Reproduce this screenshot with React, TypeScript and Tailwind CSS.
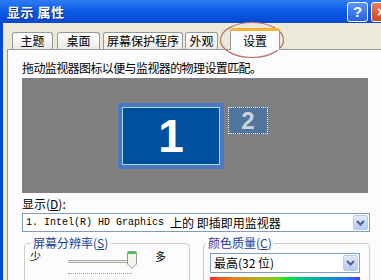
import React from 'react';

const cjk = { fontFamily: '"Noto Sans CJK SC", "Liberation Sans", sans-serif' };

const DropBtn = ({ className = '' }: { className?: string }) => (
  <div className={`flex items-center justify-center rounded-[2px] border border-[#b6c9f2] bg-gradient-to-b from-[#e2ebfd] to-[#b4c9f5] ${className}`}>
    <svg width="9" height="6" viewBox="0 0 9 6">
      <path d="M1 1 L4.5 4.5 L8 1" stroke="#4d6185" strokeWidth="2" fill="none" />
    </svg>
  </div>
);

const tabs = [
  { label: '主题', w: 'w-[41px]', ml: 'ml-[5px]' },
  { label: '桌面', w: 'w-[43px]', ml: 'ml-[4px]' },
  { label: '屏幕保护程序', w: 'w-[80px]', ml: 'ml-[3px]' },
  { label: '外观', w: 'w-[33px]', ml: 'ml-[2px]' },
];

export default function App() {
  return (
    <div className="relative w-[381px] h-[280px] overflow-hidden flex flex-col bg-[#0847d2] text-[12px] text-black" style={cjk}>
      {/* title bar */}
      <div className="h-[23px] shrink-0 flex items-center bg-gradient-to-b from-[#2f7cf6] via-[#0a5ae6] to-[#0848cf] pl-[7px]">
        <span className="text-white font-bold text-[13px] leading-none tracking-[0.5px] [text-shadow:1px_1px_0_#0a2a7a]">显示 属性</span>
        <div className="ml-auto flex gap-[3px] items-center">
          <div className="w-[21px] h-[20px] rounded-[3px] border border-white bg-gradient-to-b from-[#5b93f8] to-[#2660df] flex items-center justify-center text-white font-bold text-[15px] leading-none" style={{ fontFamily: '"Liberation Sans", sans-serif' }}>?</div>
          <div className="w-[21px] h-[20px] rounded-[3px] border border-white bg-gradient-to-b from-[#e9805c] to-[#cf4519] flex items-center justify-center text-white font-bold text-[15px] leading-none mr-[-11px]" style={{ fontFamily: '"Liberation Sans", sans-serif' }}>×</div>
        </div>
      </div>

      <div className="flex flex-1 min-h-0">
        <div className="w-[3px] shrink-0 bg-[#0847d2]" />
        <div className="flex-1 bg-[#ece9d8] pl-[4px] flex flex-col min-h-0">
          {/* tabs */}
          <div className="h-[26px] shrink-0 flex items-end">
            {tabs.map((t) => (
              <div
                key={t.label}
                className={`${t.w} ${t.ml} h-[17px] rounded-t-[3px] border border-b-0 border-[#919b9c] bg-gradient-to-b from-white to-[#ecebe6] flex items-center justify-center text-[12px] leading-none`}
              >
                {t.label}
              </div>
            ))}
            <div className="w-[50px] ml-[12px] h-[22px] mb-[-1px] relative z-10 rounded-t-[3px] border-x border-[#919b9c] border-t-[3px] border-t-[#f7b338] bg-[#fcfcfe] flex items-center justify-center text-[12px] leading-none">
              设置
            </div>
          </div>

          {/* panel */}
          <div className="flex-1 min-h-0 border-t border-l border-[#919b9c] bg-[#fcfcfe] pl-[14px] pt-[10px] flex flex-col">
            <div className="leading-[16px] tracking-[-0.6px]">拖动监视器图标以便与监视器的物理设置匹配。</div>

            <div className="mt-[2px] w-[346px] h-[115px] shrink-0 bg-[#808080] flex items-start pl-[96px] pt-[25px] gap-[4px]">
              <div className="w-[106px] h-[66px] bg-[#4a79c2] p-[4px]">
                <div className="w-full h-full border border-[#a8dcf8] bg-[#00509e] flex items-center justify-center text-white font-bold text-[46px] leading-none" style={{ fontFamily: '"Liberation Sans", sans-serif' }}>
                  1
                </div>
              </div>
              <div className="mt-[4px] w-[40px] h-[27px] border border-dotted border-white bg-[#52759d] flex items-center justify-center text-[#ccd4dc] font-bold text-[24px] leading-none" style={{ fontFamily: '"Liberation Sans", sans-serif' }}>
                2
              </div>
            </div>

            <div className="mt-[3px] leading-[16px]">显示(<span className="underline">D</span>):</div>
            <div className="mt-[1px] w-[348px] h-[19px] shrink-0 border border-[#7f9db9] bg-white flex items-center pl-[3px] pr-[1px]">
              <span className="text-[10px] whitespace-pre" style={{ fontFamily: '"Liberation Mono", monospace' }}>1. Intel(R) HD Graphics </span>
              <span className="text-[12px] leading-none">上的 即插即用监视器</span>
              <DropBtn className="ml-auto w-[15px] h-[15px]" />
            </div>

            <div className="mt-[4px] flex gap-[13px] pl-[2px] shrink-0">
              <fieldset className="w-[166px] h-[60px] rounded-[4px] border border-[#d0d0bf] px-[5px]">
                <legend className="px-[2px] ml-[1px] leading-[14px] text-[#1d3f99]">屏幕分辨率(<span className="underline">S</span>)</legend>
                <div className="flex items-start mt-[1px]">
                  <span className="text-[11px] leading-none">少</span>
                  <div className="ml-[27px] w-[69px] flex flex-col">
                    <div className="relative h-[20px]">
                      <div className="absolute left-0 right-[4px] top-[9px] h-[3px] border border-[#a9a89c] rounded-[1px] bg-[#f3f3ee]" />
                      <svg className="absolute right-0 top-[0px]" width="10" height="18" viewBox="0 0 10 18">
                        <path d="M0.5 1.5 Q0.5 0.5 1.5 0.5 H8.5 Q9.5 0.5 9.5 1.5 V13 L5 17.5 L0.5 13 Z" fill="#f5f5f0" stroke="#9a9a8a" />
                        <rect x="1" y="1" width="8" height="2" fill="#3fc353" />
                      </svg>
                    </div>
                    <div className="mt-[2px] w-[64px] border-t border-dotted border-[#9a9a8a]" />
                  </div>
                  <span className="ml-[18px] text-[11px] leading-none">多</span>
                </div>
              </fieldset>
              <fieldset className="w-[167px] h-[60px] rounded-[4px] border border-[#d0d0bf] px-[6px]">
                <legend className="px-[2px] ml-[-4px] leading-[14px] text-[#1d3f99]">颜色质量(<span className="underline">C</span>)</legend>
                <div className="mt-[3px] w-[150px] h-[20px] border border-[#7f9db9] bg-white flex items-center pl-[3px] pr-[1px]">
                  <span className="leading-none">最高(32 位)</span>
                  <DropBtn className="ml-auto w-[15px] h-[16px]" />
                </div>
                <div className="mt-[4px] w-[150px] h-[6px] bg-gradient-to-r from-[#ff2020] via-[#20e020] to-[#4040ff]" />
              </fieldset>
            </div>
          </div>
        </div>
      </div>

      {/* annotation ellipse */}
      <svg className="absolute left-[219px] top-[21px] pointer-events-none" width="66" height="38" viewBox="0 0 66 38">
        <ellipse cx="33" cy="19" rx="31.5" ry="17.5" fill="none" stroke="#b87268" strokeWidth="1.2" />
      </svg>
    </div>
  );
}
